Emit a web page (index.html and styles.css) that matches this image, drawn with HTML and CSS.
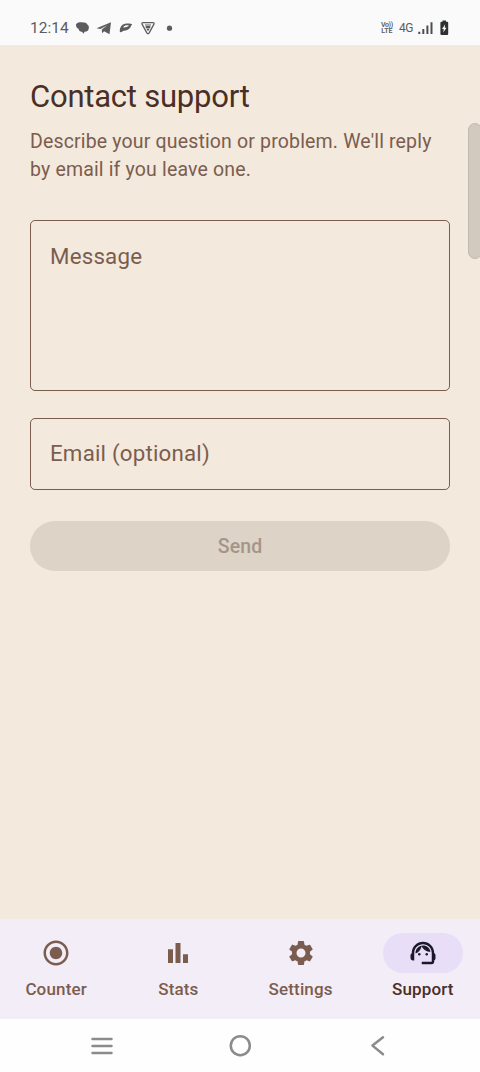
FILE: index.html
```html
<!DOCTYPE html>
<html lang="en">
<head>
<meta charset="utf-8">
<title>Contact support</title>
<link rel="stylesheet" href="styles.css">
</head>
<body>
<div class="screen">
  <header class="status">
    <span class="clock">12:14</span>
    <svg class="notices" width="100" height="20" viewBox="0 0 100 20" fill="#5b5c5e">
      <path d="M1 6.200C2.200 4.600 4 4.300 6.500 4.300c3.500 0 5.300.700 5.800 2.200 1 .6 1.600 1.600 1.600 2.900 0 2.600-1.700 4.300-4.400 4.400L8.600 15.800 7.200 14C5 13.700 3.700 12.500 3.600 10.800 1.800 10.300.8 8.500 1 6.200z"/>
      <path d="M21.500 10.200L36 4.300l-1.500 11.900-5.400-3-2 2-.3-3.600 5.600-4.300-7 3.700z"/>
      <path fill-rule="evenodd" d="M45 14.300c-.8-3 .7-7.300 4.200-8.300 3-.8 7-.5 8 .5-1.500 1-1.200 3.300-4 5-2 1.200-4 1-5.500 1.700-1 .5-1.700.900-2.700 1.100zm3.200-4.900c1.500.5 4.500-.4 5.800-1.800-2-.6-4.800-.2-5.800 1.800z"/>
      <g transform="translate(1 .3)">
        <path d="M67.200 4.300h9.600q2 0 1 1.800l-4.600 8.500q-1.200 1.700-2.400 0l-4.600-8.500q-1-1.800 1-1.800z" fill="none" stroke="#5b5c5e" stroke-width="1.300"/>
        <path d="M69 6.200h6v1h-6zM69.700 7.700h4.600v2h-4.600zM70.200 10.300h3.600L72 13z"/>
      </g>
      <circle cx="94.500" cy="10.200" r="2.600"/>
    </svg>
    <span class="volte"><span class="vo">Vo))</span><span>LTE</span></span>
    <span class="network">4G</span>
    <svg class="power" width="32" height="18" viewBox="0 0 32 18">
      <path d="M1.300 12.800h2V15h-2zM5.300 10h2v5h-2zM9.400 6.500h2V15h-2zM13.500 3.300h2V15h-2z" fill="#4d4e50"/>
      <path d="M25.500 1.500h3.500v1.300h1.200q1 0 1 1v11q0 1.200-1 1.200h-5.800q-1 0-1-1.200v-11q0-1 1-1h1.100z" fill="#2f3032"/>
      <path d="M28.200 5.200l-3.200 4.700h1.800L26.200 13.600l3.300-4.900h-1.800z" fill="#fafafa"/>
    </svg>
  </header>

  <main class="content">
    <h1 class="title">Contact support</h1>
    <p class="lead">Describe your question or problem. We'll reply<br>by email if you leave one.</p>
    <div class="field message">Message</div>
    <div class="field email">Email (optional)</div>
    <div class="send">Send</div>
    <div class="edge-handle"></div>
  </main>

  <nav class="tabs">
    <div class="tab">
      <span class="pill"><svg class="icon" viewBox="0 0 24 24"><path d="M12 7c-2.760 0-5 2.240-5 5s2.240 5 5 5 5-2.240 5-5-2.240-5-5-5zm0-5C6.480 2 2 6.480 2 12s4.480 10 10 10 10-4.480 10-10S17.520 2 12 2zm0 18c-4.420 0-8-3.580-8-8s3.580-8 8-8 8 3.580 8 8-3.580 8-8 8z"/></svg></span>
      <span class="label">Counter</span>
    </div>
    <div class="tab">
      <span class="pill"><svg class="icon" viewBox="0 0 24 24"><path d="M4 9h4v11H4zM16 13h4v7h-4zM10 4h4v16h-4z"/></svg></span>
      <span class="label">Stats</span>
    </div>
    <div class="tab">
      <span class="pill"><svg class="icon" viewBox="0 0 24 24"><path d="M19.140 12.940c.04-.3.060-.610.060-.940 0-.320-.020-.640-.070-.940l2.030-1.580c.18-.14.230-.410.120-.610l-1.920-3.320c-.120-.220-.370-.290-.590-.220l-2.390.960c-.5-.380-1.030-.7-1.620-.940l-.360-2.540c-.040-.240-.240-.410-.480-.410h-3.840c-.240 0-.430.170-.470.410l-.360 2.540c-.590.240-1.130.570-1.620.940l-2.390-.960c-.220-.080-.470 0-.590.220L2.740 8.870c-.12.210-.080.470.120.610l2.030 1.580c-.050.3-.090.630-.090.940s.020.640.070.940l-2.030 1.580c-.18.140-.230.410-.120.610l1.920 3.320c.120.220.370.290.590.220l2.390-.960c.5.380 1.030.7 1.620.940l.360 2.540c.050.240.240.410.480.410h3.840c.240 0 .440-.170.470-.410l.360-2.540c.590-.240 1.130-.560 1.620-.940l2.390.960c.220.080.470 0 .590-.220l1.920-3.320c.12-.220.070-.470-.120-.610l-2.010-1.580zM12 15.600c-1.980 0-3.600-1.620-3.600-3.600s1.620-3.600 3.600-3.600 3.600 1.620 3.600 3.600-1.620 3.600-3.600 3.600z"/></svg></span>
      <span class="label">Settings</span>
    </div>
    <div class="tab active">
      <span class="pill"><svg class="icon" viewBox="0 0 24 24"><path d="M21 12.220C21 6.730 16.740 3 12 3c-4.690 0-9 3.650-9 9.280-.6.340-1 .98-1 1.720v2c0 1.100.9 2 2 2h1v-6.100c0-3.870 3.130-7 7-7s7 3.130 7 7V19h-8v2h8c1.100 0 2-.9 2-2v-1.220c.59-.310 1-.920 1-1.640v-2.300c0-.7-.410-1.310-1-1.620z"/><circle cx="9" cy="13" r="1"/><circle cx="15" cy="13" r="1"/><path d="M18 11.030C17.520 8.180 15.040 6 12.050 6c-3.030 0-6.290 2.510-6.030 6.450 2.470-1.010 4.330-3.210 4.860-5.890 1.310 2.630 4 4.440 7.120 4.470z"/></svg></span>
      <span class="label">Support</span>
    </div>
  </nav>

  <footer class="system">
    <svg width="24" height="24" viewBox="0 0 24 24"><path d="M2.500 5h19M2.500 12h19M2.500 19h19"/></svg>
    <svg width="24" height="24" viewBox="0 0 24 24"><circle cx="12.300" cy="11.700" r="9.500"/></svg>
    <svg width="24" height="24" viewBox="0 0 24 24"><path d="M17 3.200L6.500 11.600l10.500 8.600"/></svg>
  </footer>
</div>
</body>
</html>
```
FILE: styles.css
```css
* { box-sizing: border-box; }
body { margin: 0; font-family: Roboto, sans-serif; }
.screen {
  width: 480px;
  height: 1072px;
  display: flex;
  flex-direction: column;
  overflow: hidden;
  background: #f3e9dc;
}
.status {
  height: 45px;
  flex: none;
  display: flex;
  align-items: center;
  padding: 10px 31px 0 30px;
  background: #fafafa;
  color: #5b5c5e;
}
.clock { font-size: 15.5px; width: 45px; }
.notices { margin-right: auto; }
.volte {
  display: flex;
  flex-direction: column;
  align-items: center;
  width: 14px;
  font-size: 7px;
  line-height: 6px;
  font-weight: 600;
}
.vo { letter-spacing: -0.4px; }
.network { font-size: 12px; letter-spacing: -0.4px; margin: 0 4px 0 5px; }
.content {
  flex: 1;
  position: relative;
  display: flex;
  flex-direction: column;
  padding: 32px 30px 0;
}
.title {
  margin: 0;
  font-size: 31px;
  line-height: 40px;
  letter-spacing: -0.23px;
  font-weight: 400;
  color: #4a2f27;
}
.lead {
  margin: 11px 0 0;
  font-size: 19.5px;
  line-height: 28px;
  letter-spacing: 0.16px;
  color: #7b5d50;
  white-space: nowrap;
}
.field {
  border: 1px solid #7b5d50;
  border-radius: 5px;
  padding: 20px 19px;
  font-size: 22.300px;
  line-height: 30px;
  letter-spacing: 0.2px;
  color: #7b5d50;
}
.message { height: 171px; margin-top: 36px; }
.email { height: 72px; margin-top: 27px; padding-top: 19px; }
.send {
  height: 50px;
  margin-top: 31px;
  padding-top: 1px;
  border-radius: 25px;
  background: #ddd3c7;
  color: #a59589;
  text-align: center;
  font-size: 19.5px;
  font-weight: 500;
  line-height: 50px;
  letter-spacing: 0.1px;
}
.edge-handle {
  position: absolute;
  right: -2px;
  top: 78px;
  width: 14px;
  height: 136px;
  border: 1px solid #c2b9af;
  border-radius: 8px;
  background: #d2c9bf;
}
.tabs {
  height: 100px;
  flex: none;
  display: grid;
  grid-template-columns: repeat(4, 1fr);
  column-gap: 10px;
  padding: 13.500px 1px 0 0;
  background: #f3edf7;
  color: #7b5d50;
}
.tab { display: flex; flex-direction: column; align-items: center; }
.pill {
  width: 80px;
  height: 40px;
  border-radius: 20px;
  display: flex;
  align-items: center;
  justify-content: center;
}
.icon { width: 30px; height: 30px; fill: currentColor; }
.label {
  margin-top: 5px;
  font-size: 17px;
  line-height: 22px;
  font-weight: 500;
  letter-spacing: 0.15px;
}
.active { color: #4a2f27; }
.active .pill { background: #e8def8; color: #1d192b; }
.system {
  height: 53px;
  flex: none;
  display: flex;
  justify-content: space-between;
  align-items: center;
  padding: 0 90px;
  background: #fefefe;
}
.system svg { fill: none; stroke: #8b8b8b; stroke-width: 2.500; stroke-linecap: round; stroke-linejoin: round; }
```
